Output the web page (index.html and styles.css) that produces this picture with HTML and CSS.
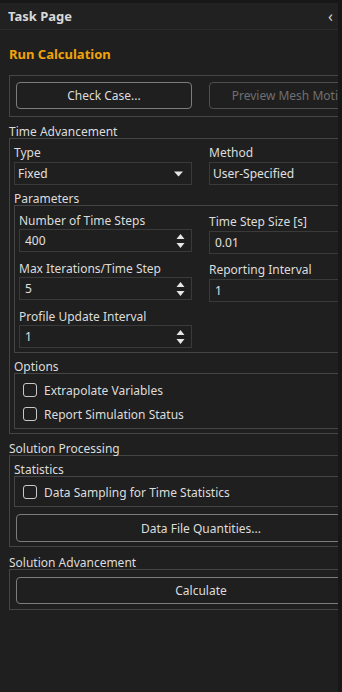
FILE: index.html
```html
<!DOCTYPE html>
<html lang="en">
<head>
	<meta charset="UTF-8">
	<title>Task Page</title>
	<link rel="stylesheet" href="styles.css">
</head>
<body>
	<div class="panel">
		<div class="main">
			<div class="header">
				<span class="header-title">Task Page</span>
				<span class="collapse">&lsaquo;</span>
			</div>
			<div class="content">
				<div class="page-title">Run Calculation</div>
				<div class="group btn-row">
					<button class="btn">Check Case...</button>
					<button class="btn" disabled>Preview Mesh Motion...</button>
				</div>

				<div class="caption">Time Advancement</div>
				<div class="group time">
					<div class="cols">
						<div class="field">
							<div class="label">Type</div>
							<div class="input select">Fixed
								<svg class="drop" width="9" height="6" viewBox="0 0 9 6"><path d="M0 0.5 H9 L4.5 5.5 Z" fill="#e6e6e6"/></svg>
							</div>
						</div>
						<div class="field">
							<div class="label">Method</div>
							<div class="input">User-Specified</div>
						</div>
					</div>

					<div class="caption sub">Parameters</div>
					<div class="group params">
						<div class="cols">
							<div class="field">
								<div class="label">Number of Time Steps</div>
								<div class="input spin">400
									<svg class="arrows" width="9" height="16" viewBox="0 0 9 16"><path d="M4.5 1 L8.5 6 H0.5 Z M0.5 10 H8.5 L4.5 15 Z" fill="#e6e6e6"/></svg>
								</div>
							</div>
							<div class="field right">
								<div class="label">Time Step Size [s]</div>
								<div class="input">0.01</div>
							</div>
							<div class="field">
								<div class="label">Max Iterations/Time Step</div>
								<div class="input spin">5
									<svg class="arrows" width="9" height="16" viewBox="0 0 9 16"><path d="M4.5 1 L8.5 6 H0.5 Z M0.5 10 H8.5 L4.5 15 Z" fill="#e6e6e6"/></svg>
								</div>
							</div>
							<div class="field right">
								<div class="label">Reporting Interval</div>
								<div class="input">1</div>
							</div>
							<div class="field">
								<div class="label">Profile Update Interval</div>
								<div class="input spin">1
									<svg class="arrows" width="9" height="16" viewBox="0 0 9 16"><path d="M4.5 1 L8.5 6 H0.5 Z M0.5 10 H8.5 L4.5 15 Z" fill="#e6e6e6"/></svg>
								</div>
							</div>
						</div>
					</div>

					<div class="caption sub">Options</div>
					<div class="group checks">
						<label class="check"><span class="box"></span>Extrapolate Variables</label>
						<label class="check"><span class="box"></span>Report Simulation Status</label>
					</div>
				</div>

				<div class="caption">Solution Processing</div>
				<div class="group processing">
					<div class="caption stat">Statistics</div>
					<div class="group checks one">
						<label class="check"><span class="box"></span>Data Sampling for Time Statistics</label>
					</div>
					<button class="btn wide">Data File Quantities...</button>
				</div>

				<div class="caption adv">Solution Advancement</div>
				<div class="group advance">
					<button class="btn wide">Calculate</button>
				</div>
			</div>
		</div>
		<div class="edge"></div>
	</div>
</body>
</html>
```
FILE: styles.css
```css
*{margin:0;padding:0;box-sizing:border-box;}
html,body{height:100%;}
body{background-color:#1f1f1f;color:#dcdcdc;font-family:"Noto Sans","Open Sans",sans-serif;font-size:12px;overflow:hidden;}

.panel{display:flex;height:100%;}
.main{width:338px;overflow:hidden;border-top:3px solid #171717;}
.edge{width:4px;background-color:#171717;}

/* header */
.header{height:27px;display:flex;align-items:center;justify-content:space-between;padding:0 5px 0 8px;border-bottom:1px solid #2b2b2b;background-color:#212121;}
.header-title{font-weight:bold;font-size:13px;color:#d8d8d8;}
.collapse{font-size:16px;color:#cfcfcf;line-height:1;}

.content{width:382px;padding:0 0 0 9px;box-sizing:content-box;}
.page-title{color:#f0a30a;font-weight:bold;font-size:13px;line-height:18px;margin:15px 0 0;height:30px;}

/* group boxes */
.group{border:1px solid #454545;}
.caption{height:16px;line-height:19px;margin-top:5px;}
.caption.adv{margin-top:6px;}

.btn-row{display:flex;gap:17px;padding:6px 0 7px 6px;}
.btn{height:27px;border:1px solid #7c7c7c;border-radius:4px;background-color:#1f1f1f;color:#dcdcdc;font-family:inherit;font-size:12px;}
.btn-row .btn{width:176px;flex:none;}
.btn[disabled]{color:#6f6f6f;border-color:#4f4f4f;}
.btn.wide{display:block;width:100%;}

.time{padding:5px 0 4px 4px;}
.cols{display:grid;grid-template-columns:178px 1fr;column-gap:17px;}
.label{height:16px;line-height:18px;margin-bottom:2px;}
.input{position:relative;height:23px;border:1px solid #3a3a3a;padding:0 3px;line-height:21px;color:#e0e0e0;}
.drop{position:absolute;right:8px;top:8px;}
.arrows{position:absolute;right:6px;top:3px;}

.time .caption.sub{margin-top:4px;}
.params{padding:5px 0 4px 4px;}
.params .cols{grid-template-columns:173px 1fr;}
.params .label{line-height:19px;}
.params .field{margin-bottom:7px;}
.params .field:last-child{margin-bottom:0;}
.params .input{padding:0 5px;}
.params .field.right{margin-top:1px;}
.params .field.right .label{margin-bottom:3px;}
.params .field.right .input{margin-bottom:-2px;}

/* checkboxes */
.checks{padding:8px 0 6px 8px;display:flex;flex-direction:column;gap:8px;}
.check{display:flex;align-items:center;height:16px;}
.box{width:14px;height:14px;border:1.5px solid #c8c8c8;border-radius:3px;margin-right:7px;}

.processing{padding:4px 4px 4px 4px;}
.caption.stat{margin-top:0;line-height:20px;}
.checks.one{padding:7px 0 6px 8px;}
.processing .btn.wide{margin:7px 0 0 2px;height:28px;width:calc(100% - 2px);}

.advance{padding:7px 4px 5px 6px;}
```
